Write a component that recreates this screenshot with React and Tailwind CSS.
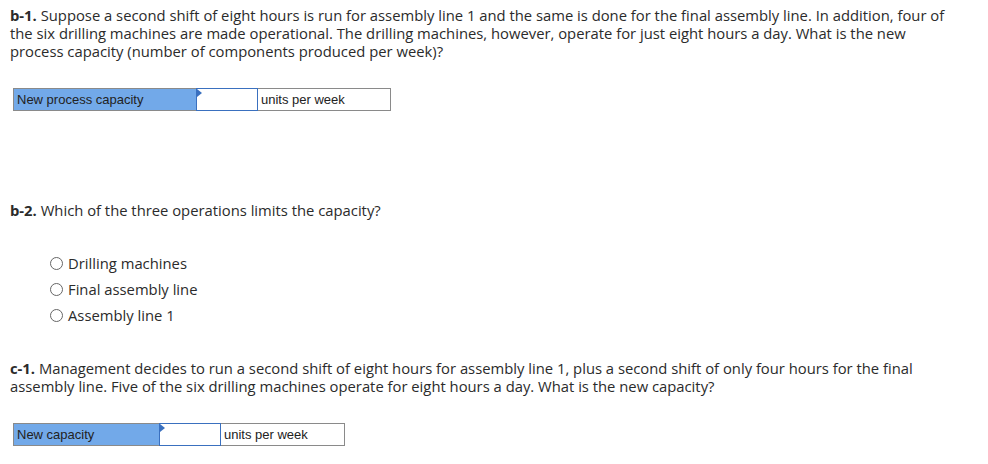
import { useState } from 'react';

// One answer row: blue label, input cell, units cell
function AnswerRow({ label, labelWidth, unitsWidth }) {
  const [value, setValue] = useState('');
  return (
    <div className="flex h-[23px] font-['Liberation_Sans',Arial,sans-serif] text-[13px] text-[#222]">
      <div
        className="flex items-center border border-[#8a8a8a] border-r-0 bg-[#72a9e9] pl-[3px]"
        style={{ width: labelWidth }}
      >
        {label}
      </div>
      <div className="relative w-[62px] border border-[#3a70bf] bg-white">
        {/* little blue corner flag */}
        <span className="absolute left-0 top-0 h-0 w-0 border-t-[4px] border-b-[4px] border-l-[5px] border-t-transparent border-b-transparent border-l-[#3a70bf]" />
        <input
          value={value}
          onChange={(e) => setValue(e.target.value)}
          className="h-full w-full bg-transparent px-1 outline-none"
        />
      </div>
      <div
        className="flex items-center border border-[#8a8a8a] border-l-0 pl-[3px]"
        style={{ width: unitsWidth }}
      >
        units per week
      </div>
    </div>
  );
}

function Radio({ label }) {
  return (
    <label className="flex items-center gap-[5px] h-[26px]">
      <span className="h-[13px] w-[13px] rounded-full border border-[#666] bg-white" />
      <span>{label}</span>
    </label>
  );
}

export default function App() {
  return (
    <div className="min-h-screen bg-white px-[10px] pt-[6px] font-['Open_Sans',sans-serif] text-[14.8px] leading-[18px] text-[#2b2b2b]">
      {/* b-1 */}
      <p>
        <b>b-1.</b> Suppose a second shift of eight hours is run for assembly line 1 and the same is done for the final assembly line. In addition, four of
        <br />
        the six drilling machines are made operational. The drilling machines, however, operate for just eight hours a day. What is the new
        <br />
        process capacity (number of components produced per week)?
      </p>

      <div className="mt-[28px] ml-[3px]">
        <AnswerRow label="New process capacity" labelWidth={183} unitsWidth={133} />
      </div>

      {/* b-2 */}
      <p className="mt-[90px]">
        <b>b-2.</b> Which of the three operations limits the capacity?
      </p>

      <div className="mt-[31px] ml-[40px]">
        <Radio label="Drilling machines" />
        <Radio label="Final assembly line" />
        <Radio label="Assembly line 1" />
      </div>

      {/* c-1 */}
      <p className="mt-[31px]">
        <b>c-1.</b> Management decides to run a second shift of eight hours for assembly line 1, plus a second shift of only four hours for the final
        <br />
        assembly line. Five of the six drilling machines operate for eight hours a day. What is the new capacity?
      </p>

      <div className="mt-[28px] ml-[3px]">
        <AnswerRow label="New capacity" labelWidth={146} unitsWidth={124} />
      </div>
    </div>
  );
}
